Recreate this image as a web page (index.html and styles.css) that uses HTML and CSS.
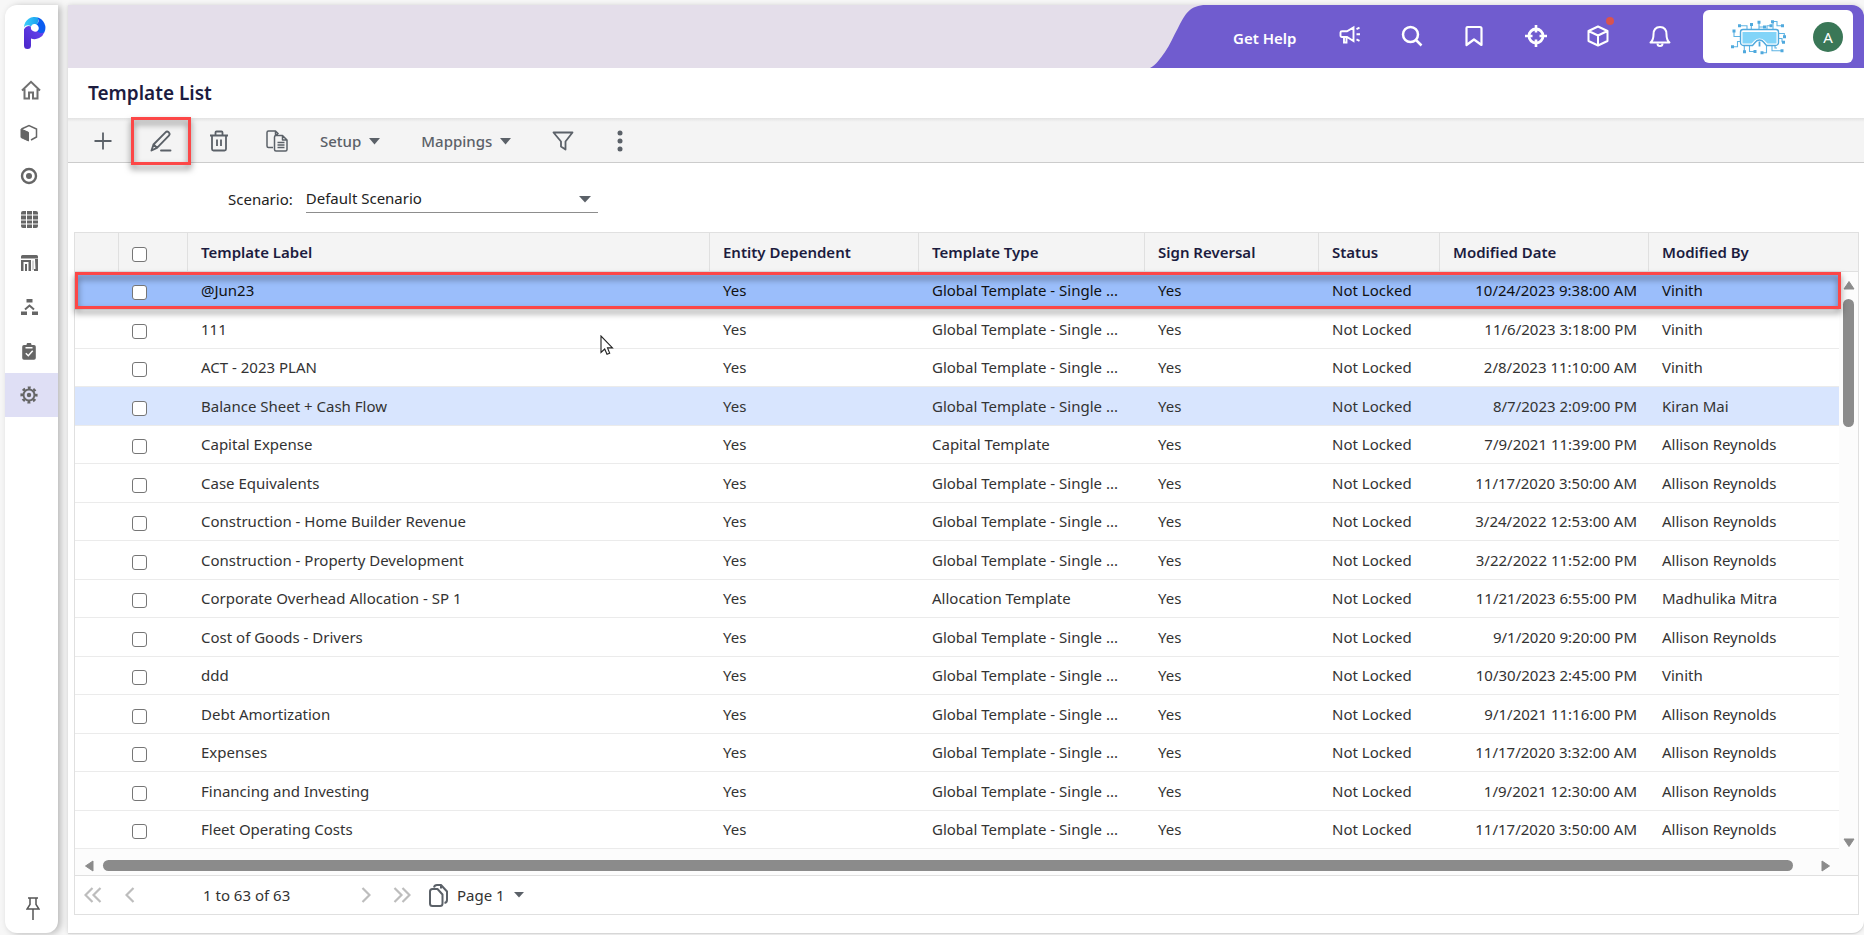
FILE: index.html
```html
<!DOCTYPE html>
<html lang="en">
<head>
<meta charset="utf-8">
<title>Template List</title>
<link rel="stylesheet" href="styles.css">
</head>
<body>
<div class="app">
  <nav class="sidebar" aria-label="Main">
    <a class="brand" href="#" aria-label="Planful home">
      <svg width="22" height="32" viewBox="0 0 22 32">
        <defs>
          <linearGradient id="stem" x1="0" y1="1" x2="1" y2="0"><stop offset="0" stop-color="#4a25c8"/><stop offset="1" stop-color="#6a4af5"/></linearGradient>
          <linearGradient id="arc" x1="0" y1="0" x2="1" y2="0"><stop offset="0" stop-color="#3ed0fa"/><stop offset="1" stop-color="#1aa0f0"/></linearGradient>
        </defs>
        <path d="M0 12.500A5 5 0 0 1 7 9.500A4.200 4.200 0 0 0 14 13.500L20.500 15A10.500 10.500 0 0 1 7 21.500V28.500A3.500 3.500 0 0 1 0 28.500Z" fill="url(#stem)"/>
        <path d="M0 10.500A10.500 10.500 0 0 1 14.500 .8L13.500 8A4 4 0 0 0 7 9.500C4.500 7.500 1.500 8 0 10.500Z" fill="url(#arc)"/>
        <path d="M13.500 .5A10.600 10.600 0 0 1 20.500 15C18 17 15 16 13.500 14.200A4.200 4.200 0 0 0 12.500 7.500C15 5.500 15 3 13.500 .5Z" fill="#0b5cf0"/>
      </svg>
    </a>
    <a class="nav-item short" href="#" aria-label="Home"><svg class="home" width="20" height="20" viewBox="0 0 20 20" fill="none" stroke="#707070" stroke-width="2"><path d="M1 10.500 10 1.800l9 8.700M3.500 9v9.500H8V12.500h4v6h4.500V9"/></svg></a>
    <a class="nav-item short" href="#" aria-label="Models"><svg width="18" height="18" viewBox="0 0 18 18" fill="none" stroke="#666" stroke-width="1.500"><path d="M1.500 5 9 1.500 16.500 5v8L11 16"/><path d="M1 5l7.500 3.300V17L1 13.500Z" fill="#666" stroke-width="1"/></svg></a>
    <a class="nav-item short" href="#" aria-label="Target"><svg width="18" height="18" viewBox="0 0 18 18"><circle cx="9" cy="9" r="7" fill="none" stroke="#666" stroke-width="2.400"/><circle cx="9" cy="9" r="3" fill="#666"/></svg></a>
    <a class="nav-item" href="#" aria-label="Grid"><svg width="17" height="17" viewBox="0 0 17 17" fill="#666"><path d="M2 0h3v3.500H0V2a2 2 0 0 1 2-2ZM6 0h5v3.500H6ZM12 0h3a2 2 0 0 1 2 2v1.500h-5ZM0 4.500h5v4H0ZM6 4.500h5v4H6ZM12 4.500h5v4h-5ZM0 9.500h5v3H0ZM6 9.500h5v3H6ZM12 9.500h5v3h-5ZM0 13.500h5V17H2a2 2 0 0 1-2-2ZM6 13.500h5V17H6ZM12 13.500h5V15a2 2 0 0 1-2 2h-3Z"/></svg></a>
    <a class="nav-item" href="#" aria-label="Dashboards"><svg width="17" height="16" viewBox="0 0 17 16"><path d="M0 1.500A1.500 1.500 0 0 1 1.500 0H15.500A1.500 1.500 0 0 1 17 1.500V3.500H0ZM0 5h10v2H2.500v9H0ZM4 9h2v7H4ZM7.500 7h2.500v9H7.500ZM14 4h3v12H13v-2h1.500Z" fill="#666"/><path d="M12 5.500V15" stroke="#aaa" stroke-width="1"/></svg></a>
    <a class="nav-item" href="#" aria-label="Hierarchy"><svg width="17" height="16" viewBox="0 0 17 16"><path d="M5.500 0h6v3.500h-6ZM0 12.500h6V16H0ZM11 12.500h6V16h-6Z" fill="#666"/><path d="M4 10.500 8.500 6.500 13 10.500" fill="none" stroke="#666" stroke-width="2"/></svg></a>
    <a class="nav-item" href="#" aria-label="Tasks"><svg width="14" height="17" viewBox="0 0 14 17"><path d="M2 2h2.500a2.500 2.500 0 0 1 5 0H12a1.800 1.800 0 0 1 1.800 1.800V15A1.800 1.800 0 0 1 12 16.800H2A1.800 1.800 0 0 1 .2 15V3.800A1.800 1.800 0 0 1 2 2Z" fill="#666"/><path d="M3.500 4.700h7M3.800 10.200l2.500 2.500 4.400-5" fill="none" stroke="#fff" stroke-width="1.500"/></svg></a>
    <a class="nav-item active" href="#" aria-label="Settings" aria-current="page"><svg width="18" height="18" viewBox="-9 -9 18 18"><circle r="5.500" fill="none" stroke="#666" stroke-width="2"/><circle r="2.200" fill="#666"/><circle r="7.300" fill="none" stroke="#666" stroke-width="2.600" stroke-dasharray="2.900 2.834" stroke-dashoffset="1.450"/></svg></a>
    <button class="pin" type="button" aria-label="Pin menu"><svg width="14" height="23" viewBox="0 0 14 23" fill="none" stroke="#555" stroke-width="1.500"><path d="M2 1h10M4 1v6.500L1 12h12L10 7.500V1M7 12v11"/></svg></button>
  </nav>

  <main class="main">
    <header class="topbar">
      <svg class="swoosh" width="56" height="63" viewBox="0 0 56 63"><path d="M0 63C6 60 10 54 15 47S23 32 28 23C35 9 40 0 56 0V63Z" fill="#705ccf"/></svg>
      <div class="actions">
        <a class="help" href="#">Get Help</a>
        <button class="icon-btn" type="button" aria-label="Announcements"><svg width="22" height="22" viewBox="0 0 22 22" fill="none" stroke="#fff" stroke-width="1.900"><path d="M1.500 7.500Q1.500 6.300 3 6.300H8L14.500 2.500V16L8 12H3Q1.500 12 1.500 10.500ZM5 12v5.500h2.500V12M17.500 4.200l3-1.500M17.500 9.300H21M17.500 14.300l3 1.500"/></svg></button>
        <button class="icon-btn" type="button" aria-label="Search"><svg width="22" height="22" viewBox="0 0 22 22" fill="none" stroke="#fff" stroke-width="2.500"><circle cx="9.500" cy="9.500" r="7.500"/><path d="M15 15l5.500 5.500"/></svg></button>
        <button class="icon-btn" type="button" aria-label="Bookmarks"><svg width="22" height="22" viewBox="0 0 22 22" fill="none" stroke="#fff" stroke-width="2.200" stroke-linejoin="round"><path d="M3.500 3Q3.500 2 4.500 2H17Q18.500 2 18.500 3.500V20L11 14.500 3.500 20Z"/></svg></button>
        <button class="icon-btn" type="button" aria-label="Locate"><svg width="22" height="22" viewBox="0 0 22 22" fill="none" stroke="#fff"><circle cx="11" cy="11" r="7" stroke-width="2.800"/><path d="M11 0v7.500M11 14.500V22M0 11h7.500M14.500 11H22" stroke-width="2.600"/></svg></button>
        <button class="icon-btn" type="button" aria-label="Products"><svg width="22" height="22" viewBox="0 0 22 22" fill="none" stroke="#fff" stroke-width="2" stroke-linejoin="round"><path d="M11 1.500 20.500 6v10L11 20.500 1.500 16V6ZM1.500 6 11 10.500 20.500 6M11 10.500v10"/></svg><span class="dot"></span></button>
        <button class="icon-btn" type="button" aria-label="Notifications"><svg width="22" height="22" viewBox="0 0 22 22" fill="none" stroke="#fff" stroke-width="2" stroke-linejoin="round"><path d="M1.500 17.500C4 15.500 4.500 14 4.500 9.500 4.500 4.500 7 2 11 2s6.500 2.500 6.500 7.500c0 4.500.5 6 3 8Z"/><path d="M8.500 18.500a2.500 2.500 0 0 0 5 0"/></svg></button>
        <div class="account">
          <svg width="56" height="36" viewBox="0 0 56 36" fill="none" stroke="#5fb4e4" stroke-width="1.100">
            <path d="M3 12v5.500H10M8.300 6.800H16V11M20.300 5.500V11M28 3.200V11M28 8H33M40 6.800H36V11M41.700 2.500H46V6.800H51.300M42 2.500V11M53.300 17.800V14.500H47M47 19.500H51V23.200M1.300 27.800H6.500V22.500H10M13.300 32.800V26M18.500 26V32.500H23.700M31 33.800H35.500V26M41 26V31.800H50.700M44 26V29H46"/>
            <g fill="#50a9dd" stroke="none"><path d="M1.500 10.500h3v3h-3ZM7 5.300h3v3H7ZM19 4h3v3h-3ZM26.500 1.800h3v3h-3ZM32 6.500h3v3h-3ZM38.500 5.300h3v3h-3ZM40 1.300h3v3h-3ZM50 5.300h3v3h-3ZM52 16.300h3v3h-3ZM51 21.800h3v3h-3ZM49.500 30.300h3v3h-3ZM0 26.300h3v3H0ZM12 31.300h3v3h-3ZM22.500 31h3v3h-3ZM29.500 32.300h3v3h-3Z"/></g>
            <path d="M12 10.500H45a2.500 2.500 0 0 1 2.500 2.500V23.500a3 3 0 0 1-3 3H35.500L32.500 23a5 5 0 0 0-8 0L21.500 26.500H12.500a3 3 0 0 1-3-3V13a2.500 2.500 0 0 1 2.500-2.500Z" fill="#fff" stroke="#50a9dd" stroke-width="1.400"/>
            <path d="M11.500 13H45.500V24.500H36.500L33.500 21.500a7 7 0 0 0-10 0L20.500 24.500H11.500Z" fill="#82d4f8" stroke="none"/>
            <path d="M28.500 22.500v5" stroke="#50a9dd" stroke-width="1.800"/>
          </svg>
          <button class="avatar" type="button" aria-label="Account">A</button>
        </div>
      </div>
    </header>

    <h1 class="title">Template List</h1>

    <div class="toolbar" role="toolbar" aria-label="Template actions">
      <button class="tool" type="button" aria-label="Add"><svg width="22" height="22" viewBox="0 0 22 22" fill="none" stroke="#5b6168" stroke-width="1.800"><path d="M11 2.500v17M2.500 11h17"/></svg></button>
      <button class="tool edit" type="button" aria-label="Edit"><svg width="22" height="22" viewBox="0 0 22 22" fill="none" stroke="#5b6168" stroke-width="1.900" stroke-linejoin="round" stroke-linecap="round"><path d="M1.500 20.500 3.500 14.500 15.500 2.300Q17 .8 18.700 2.300 20.400 4 18.900 5.600L7 17.800ZM3.500 14.500 7 17.800M11 20.500h9.500"/></svg></button>
      <button class="tool" type="button" aria-label="Delete"><svg width="22" height="22" viewBox="0 0 22 22" fill="none" stroke="#5b6168" stroke-width="1.800" stroke-linejoin="round"><path d="M2 5.500h18M7.500 5V2.500Q7.500 1.500 8.500 1.500h5Q14.500 1.500 14.500 2.500V5M4 5.500V19Q4 20.500 5.500 20.500h11Q18 20.500 18 19V5.500M9 9.500v6.500M13 9.500v6.500"/></svg></button>
      <button class="tool" type="button" aria-label="Copy"><svg width="22" height="22" viewBox="0 0 22 22" fill="none" stroke="#5b6168" stroke-width="1.500" stroke-linejoin="round"><path d="M7 17.500H2.500Q1 17.500 1 16V2.500Q1 1 2.500 1H9.500L12.500 4M9.500 1V4.500H12"/><path d="M10 5.500H16.500L21 10V19.500Q21 21 19.500 21H10Q8.500 21 8.500 19.500V7Q8.500 5.500 10 5.500ZM16.500 5.500V10H21M11.500 12.500h7M11.500 15h7M11.500 17.500h7"/></svg></button>
      <button class="tool menu setup" type="button">Setup<svg width="11" height="7" viewBox="0 0 11 7"><path d="M0 0H11L5.500 6.500Z" fill="#5b6168"/></svg></button>
      <button class="tool menu" type="button">Mappings<svg width="11" height="7" viewBox="0 0 11 7"><path d="M0 0H11L5.500 6.500Z" fill="#5b6168"/></svg></button>
      <button class="tool filter" type="button" aria-label="Filter"><svg width="22" height="22" viewBox="0 0 22 22" fill="none" stroke="#5b6168" stroke-width="1.800" stroke-linejoin="round"><path d="M1.500 2.500h19L13.500 11.500V19.500L9 16.500V11.500Z"/></svg></button>
      <button class="tool more" type="button" aria-label="More"><svg width="6" height="22" viewBox="0 0 6 22" fill="#5b6168"><circle cx="3" cy="3" r="2.500"/><circle cx="3" cy="11" r="2.500"/><circle cx="3" cy="19" r="2.500"/></svg></button>
    </div>

    <div class="scenario">
      <label for="scenario">Scenario:</label>
      <div class="select-wrap">
        <select id="scenario"><option>Default Scenario</option></select>
        <svg class="caret" width="12" height="7" viewBox="0 0 12 7"><path d="M0 0H12L6 6.500Z" fill="#5b6168"/></svg>
      </div>
    </div>

    <section class="grid-panel">
      <div class="grid">
        <table class="table">
          <colgroup><col class="c-gap"><col class="c-check"><col><col class="c-entity"><col class="c-type"><col class="c-sign"><col class="c-status"><col class="c-date"><col class="c-by"></colgroup>
          <thead><tr><th></th><th class="check"><input type="checkbox" aria-label="Select all"></th><th>Template Label</th><th>Entity Dependent</th><th>Template Type</th><th>Sign Reversal</th><th>Status</th><th>Modified Date</th><th>Modified By</th></tr></thead>
          <tbody>
            <tr class="selected"><td></td><td class="check"><input type="checkbox" aria-label="Select @Jun23"></td><td>@Jun23</td><td>Yes</td><td>Global Template - Single ...</td><td>Yes</td><td>Not Locked</td><td class="date">10/24/2023 9:38:00 AM</td><td>Vinith</td></tr>
            <tr><td></td><td class="check"><input type="checkbox" aria-label="Select 111"></td><td>111</td><td>Yes</td><td>Global Template - Single ...</td><td>Yes</td><td>Not Locked</td><td class="date">11/6/2023 3:18:00 PM</td><td>Vinith</td></tr>
            <tr><td></td><td class="check"><input type="checkbox" aria-label="Select ACT - 2023 PLAN"></td><td>ACT - 2023 PLAN</td><td>Yes</td><td>Global Template - Single ...</td><td>Yes</td><td>Not Locked</td><td class="date">2/8/2023 11:10:00 AM</td><td>Vinith</td></tr>
            <tr class="hovered"><td></td><td class="check"><input type="checkbox" aria-label="Select Balance Sheet + Cash Flow"></td><td>Balance Sheet + Cash Flow</td><td>Yes</td><td>Global Template - Single ...</td><td>Yes</td><td>Not Locked</td><td class="date">8/7/2023 2:09:00 PM</td><td>Kiran Mai</td></tr>
            <tr><td></td><td class="check"><input type="checkbox" aria-label="Select Capital Expense"></td><td>Capital Expense</td><td>Yes</td><td>Capital Template</td><td>Yes</td><td>Not Locked</td><td class="date">7/9/2021 11:39:00 PM</td><td>Allison Reynolds</td></tr>
            <tr><td></td><td class="check"><input type="checkbox" aria-label="Select Case Equivalents"></td><td>Case Equivalents</td><td>Yes</td><td>Global Template - Single ...</td><td>Yes</td><td>Not Locked</td><td class="date">11/17/2020 3:50:00 AM</td><td>Allison Reynolds</td></tr>
            <tr><td></td><td class="check"><input type="checkbox" aria-label="Select Construction - Home Builder Revenue"></td><td>Construction - Home Builder Revenue</td><td>Yes</td><td>Global Template - Single ...</td><td>Yes</td><td>Not Locked</td><td class="date">3/24/2022 12:53:00 AM</td><td>Allison Reynolds</td></tr>
            <tr><td></td><td class="check"><input type="checkbox" aria-label="Select Construction - Property Development"></td><td>Construction - Property Development</td><td>Yes</td><td>Global Template - Single ...</td><td>Yes</td><td>Not Locked</td><td class="date">3/22/2022 11:52:00 PM</td><td>Allison Reynolds</td></tr>
            <tr><td></td><td class="check"><input type="checkbox" aria-label="Select Corporate Overhead Allocation - SP 1"></td><td>Corporate Overhead Allocation - SP 1</td><td>Yes</td><td>Allocation Template</td><td>Yes</td><td>Not Locked</td><td class="date">11/21/2023 6:55:00 PM</td><td>Madhulika Mitra</td></tr>
            <tr><td></td><td class="check"><input type="checkbox" aria-label="Select Cost of Goods - Drivers"></td><td>Cost of Goods - Drivers</td><td>Yes</td><td>Global Template - Single ...</td><td>Yes</td><td>Not Locked</td><td class="date">9/1/2020 9:20:00 PM</td><td>Allison Reynolds</td></tr>
            <tr><td></td><td class="check"><input type="checkbox" aria-label="Select ddd"></td><td>ddd</td><td>Yes</td><td>Global Template - Single ...</td><td>Yes</td><td>Not Locked</td><td class="date">10/30/2023 2:45:00 PM</td><td>Vinith</td></tr>
            <tr><td></td><td class="check"><input type="checkbox" aria-label="Select Debt Amortization"></td><td>Debt Amortization</td><td>Yes</td><td>Global Template - Single ...</td><td>Yes</td><td>Not Locked</td><td class="date">9/1/2021 11:16:00 PM</td><td>Allison Reynolds</td></tr>
            <tr><td></td><td class="check"><input type="checkbox" aria-label="Select Expenses"></td><td>Expenses</td><td>Yes</td><td>Global Template - Single ...</td><td>Yes</td><td>Not Locked</td><td class="date">11/17/2020 3:32:00 AM</td><td>Allison Reynolds</td></tr>
            <tr><td></td><td class="check"><input type="checkbox" aria-label="Select Financing and Investing"></td><td>Financing and Investing</td><td>Yes</td><td>Global Template - Single ...</td><td>Yes</td><td>Not Locked</td><td class="date">1/9/2021 12:30:00 AM</td><td>Allison Reynolds</td></tr>
            <tr><td></td><td class="check"><input type="checkbox" aria-label="Select Fleet Operating Costs"></td><td>Fleet Operating Costs</td><td>Yes</td><td>Global Template - Single ...</td><td>Yes</td><td>Not Locked</td><td class="date">11/17/2020 3:50:00 AM</td><td>Allison Reynolds</td></tr>
          </tbody>
        </table>
        <div class="vscroll">
          <svg width="12" height="9" viewBox="0 0 12 9"><path d="M6 .5 11 8H1Z" fill="#8b8b8b" stroke="#8b8b8b" stroke-linejoin="round"/></svg>
          <span class="vthumb"></span>
          <svg class="down" width="12" height="9" viewBox="0 0 12 9"><path d="M6 8.500 11 1H1Z" fill="#8b8b8b" stroke="#8b8b8b" stroke-linejoin="round"/></svg>
        </div>
        <span class="row-mark"></span>
        <svg class="cursor" width="14" height="21" viewBox="0 0 14 21"><path d="M1 1V17.500L4.700 14 7 19.300 9.700 18.200 7.500 12.900H12.500Z" fill="#fff" stroke="#222" stroke-width="1.100"/></svg>
      </div>
      <div class="hscroll">
        <svg width="9" height="12" viewBox="0 0 9 12"><path d="M.5 6 8 1V11Z" fill="#8b8b8b" stroke="#8b8b8b" stroke-linejoin="round"/></svg>
        <span class="hthumb"></span>
        <svg width="9" height="12" viewBox="0 0 9 12"><path d="M8.500 6 1 1V11Z" fill="#8b8b8b" stroke="#8b8b8b" stroke-linejoin="round"/></svg>
      </div>
      <div class="pager">
        <button class="page-btn first" type="button" aria-label="First page"><svg width="18" height="16" viewBox="0 0 18 16" fill="none" stroke="#bdbdbd" stroke-width="2.200"><path d="M8.500 1 1.500 8l7 7M16.500 1 9.500 8l7 7"/></svg></button>
        <button class="page-btn prev" type="button" aria-label="Previous page"><svg width="10" height="16" viewBox="0 0 10 16" fill="none" stroke="#bdbdbd" stroke-width="2.200"><path d="M8.500 1 1.500 8l7 7"/></svg></button>
        <span class="range">1 to 63 of 63</span>
        <button class="page-btn next" type="button" aria-label="Next page"><svg width="10" height="16" viewBox="0 0 10 16" fill="none" stroke="#bdbdbd" stroke-width="2.200"><path d="M1.500 1 8.500 8l-7 7"/></svg></button>
        <button class="page-btn last" type="button" aria-label="Last page"><svg width="18" height="16" viewBox="0 0 18 16" fill="none" stroke="#bdbdbd" stroke-width="2.200"><path d="M1.500 1 8.500 8l-7 7M9.500 1 16.500 8l-7 7"/></svg></button>
        <button class="page-menu" type="button"><svg width="19" height="23" viewBox="0 0 19 23" fill="none" stroke="#5b6168" stroke-width="2" stroke-linejoin="round"><path d="M1 7.500Q1 5 3.500 5H8.500L13.500 10.500V19.500Q13.500 22 11 22H3.500Q1 22 1 19.500Z"/><path d="M5 3.500Q5.500 1 8 1H12L18 7.500V16Q18 18.500 15.500 19M12 1V4.500"/></svg>Page 1<svg width="10" height="6" viewBox="0 0 10 6"><path d="M0 0H10L5 5.500Z" fill="#5b6168"/></svg></button>
      </div>
    </section>
  </main>
</div>
</body>
</html>
```

FILE: styles.css
```css
* { box-sizing: border-box; }
body {
  margin: 0;
  background: #f7f7f7;
  color: #333;
  font: 15px/20px "Noto Sans", "Open Sans", sans-serif;
}
button, select, input { font: inherit; color: inherit; }
button { padding: 0; border: 0; background: none; display: flex; align-items: center; }
svg { display: block; flex: none; }

.app { display: flex; min-height: 100vh; padding: 5px 0 2px 5px; }

.sidebar {
  display: flex; flex-direction: column; align-items: stretch;
  width: 53px; margin-right: 10px;
  background: #fff; border-radius: 12px 0 12px 12px;
  box-shadow: 3px 1px 7px rgba(0, 0, 0, .25);
}
.brand { display: flex; justify-content: center; height: 63px; padding: 12px 0 0 6px; }
.nav-item { display: flex; align-items: center; justify-content: center; height: 44px; padding-right: 5px; }
.nav-item.short { height: 43px; }
.nav-item.active { background: #dfdff5; }
.nav-item .home { margin-left: 4px; }
.pin { justify-content: center; margin: auto 0 13px; padding-left: 3px; }

.main {
  display: flex; flex-direction: column; flex: 1; min-width: 0;
  background: #fff; border-radius: 0 12px 12px 0;
  box-shadow: 0 1px 1px #d5d5d5, 0 0 5px rgba(0, 0, 0, .15);
}
.topbar {
  display: flex; justify-content: flex-end; height: 63px;
  background: #e4deea; border-radius: 0 12px 0 0;
}
.actions {
  display: flex; align-items: center;
  padding: 0 11px 0 27px;
  background: #705ccf; border-radius: 0 12px 0 0;
}
.help { width: 106px; padding-top: 2px; color: #fff; font-weight: 600; text-decoration: none; }
.icon-btn { position: relative; width: 22px; margin-right: 40px; padding-bottom: 2px; }
.dot { position: absolute; top: -8px; right: -5px; width: 8px; height: 8px; border-radius: 50%; background: #d9534f; }
.account {
  display: flex; align-items: center; gap: 26px;
  height: 53px; padding: 0 10px 0 28px; margin-left: -8px;
  background: #fff; border-radius: 6px;
}
.avatar { justify-content: center; width: 30px; height: 30px; border-radius: 50%; background: #3a7757; color: #fff; }

.title { margin: 0; padding: 11px 20px; color: #1c1c3f; font-size: 19px; line-height: 28px; font-weight: 600; }

.toolbar {
  display: flex; align-items: center; gap: 36px;
  height: 45px; padding: 2px 0 0 24px;
  background: linear-gradient(#e2e2e2, #f4f4f4 4px); border-bottom: 1px solid #ccc;
}
.tool { color: #5b6168; font-weight: 500; }
.edit { position: relative; }
.edit::after {
  content: ""; position: absolute; inset: -13px -19px;
  border: 3px solid #fc4747; filter: drop-shadow(0 4px 3px rgba(0, 0, 0, .5));
}
.menu { gap: 8px; margin-right: 5px; }
.setup { margin-left: -4px; }
.filter { margin-right: 7px; }

.scenario { display: flex; align-items: center; gap: 13px; padding: 22px 0 19px 160px; color: #222; }
.select-wrap { position: relative; width: 292px; }
.scenario select {
  width: 100%; height: 28px; padding: 0 0 2px; appearance: none;
  border: 0; border-bottom: 1px solid #8d8d8d; border-radius: 0; background: none;
}
.caret { position: absolute; right: 7px; top: 11px; }

.grid-panel { margin: 0 5px 18px 6px; border: 1px solid #e0e0e0; }
.grid { position: relative; display: flex; }
.table { flex: 1; min-width: 0; width: 100%; table-layout: fixed; border-collapse: separate; border-spacing: 0; }
.c-gap { width: 44px; }
.c-check { width: 69px; }
.c-entity { width: 209px; }
.c-type { width: 226px; }
.c-sign { width: 174px; }
.c-status { width: 121px; }
.c-date { width: 209px; }
.c-by { width: 190px; }
th, td { padding: 0 12px 1px 13px; text-align: left; white-space: nowrap; overflow: hidden; }
th {
  height: 39px; background: #f4f4f4; color: #1c1c3f; font-weight: 600;
  border-right: 1px solid #e0e0e0; border-bottom: 1px solid #e0e0e0;
}
th:last-child { border-right: 0; }
td { height: 38px; border-bottom: 1px solid #ebebeb; }
tr:nth-child(even) td { height: 39px; }
td.date { text-align: right; }
th.check, td.check { padding: 4px 0 0 13px; }
.selected td { background: #9bbefb; color: #111; }
.hovered td { background: #d8e5fe; }
input[type="checkbox"] {
  display: block; appearance: none; width: 15px; height: 15px; margin: 0;
  border: 1px solid #767676; border-radius: 3px; background: #fff;
}

.vscroll {
  display: flex; flex-direction: column; align-items: center;
  width: 19px; padding-top: 48px;
  background: linear-gradient(#f4f4f4 38px, #e0e0e0 38px, #e0e0e0 39px, #fcfcfc 39px);
}
.vthumb { width: 11px; height: 128px; margin-top: 9px; border-radius: 6px; background: #8b8b8b; }
.down { margin-top: auto; margin-bottom: 2px; }
.row-mark {
  position: absolute; left: 0; right: 17px; top: 39px; height: 37px;
  border: 3px solid #fc4747; filter: drop-shadow(0 4px 3px rgba(0, 0, 0, .5));
}
.cursor { position: absolute; left: 525px; top: 102px; }

.hscroll {
  display: flex; align-items: center; gap: 9px;
  height: 27px; padding: 7px 28px 0 10px;
  background: #fcfcfc; border-bottom: 1px solid #e0e0e0;
}
.hthumb { flex: 1; height: 11px; margin-right: 19px; border-radius: 6px; background: #8b8b8b; }

.pager { display: flex; align-items: center; height: 38px; padding-left: 9px; }
.prev { margin-left: 23px; }
.range { width: 158px; margin-left: 68px; }
.last { margin-left: 22px; }
.page-menu { gap: 9px; margin-left: 18px; }
```
